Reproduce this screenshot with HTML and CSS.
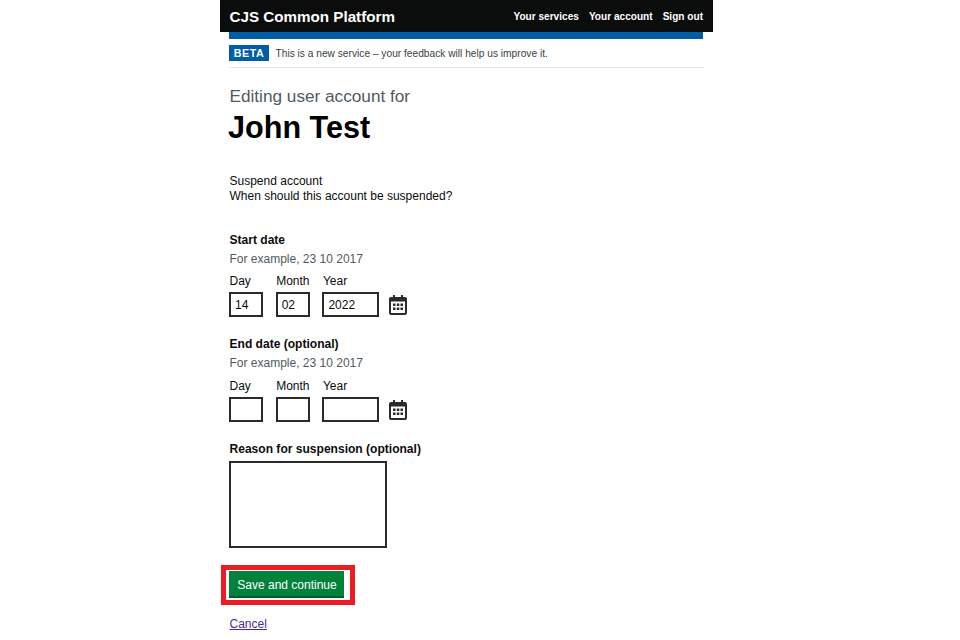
FILE: index.html
```html
<!DOCTYPE html>
<html lang="en">
<head>
<meta charset="utf-8">
<title>Editing user account</title>
<link rel="stylesheet" href="styles.css">
</head>
<body>
<div class="page">
  <header class="topbar">
    <span class="brand">CJS Common Platform</span>
    <nav class="topnav"><a>Your services</a><a>Your account</a><a>Sign out</a></nav>
  </header>
  <main class="content">
    <div class="blue"></div>
    <div class="phase"><strong class="tag">BETA</strong><span class="phase-text">This is a new service – your feedback will help us improve it.</span></div>
    <p class="caption">Editing user account for</p>
    <h1 class="name">John Test</h1>
    <p class="intro">Suspend account<br>When should this account be suspended?</p>

    <section class="date date-start">
      <h2 class="legend">Start date</h2>
      <p class="hint">For example, 23 10 2017</p>
      <div class="fields">
        <label class="field"><span>Day</span><input class="box w2" value="14"></label>
        <label class="field"><span>Month</span><input class="box w2" value="02"></label>
        <label class="field"><span>Year</span><input class="box w4" value="2022"></label>
        <svg class="cal" viewBox="0 0 18 20" width="18" height="20"><path fill="#2b2b2b" d="M4 0h2v3H4zM12 0h2v3h-2z"/><path fill="#2b2b2b" fill-rule="evenodd" d="M2 2h14a2 2 0 0 1 2 2v14a2 2 0 0 1-2 2H2a2 2 0 0 1-2-2V4a2 2 0 0 1 2-2zM2 6.500V18h14V6.500z"/><path fill="#2b2b2b" d="M4 8.500h2.500V11H4zM7.800 8.500h2.500V11H7.800zM11.500 8.500H14V11h-2.500zM4 12.500h2.500V15H4zM7.800 12.500h2.500V15H7.800zM11.500 12.500H14V15h-2.500z"/></svg>
      </div>
    </section>

    <section class="date date-end">
      <h2 class="legend">End date (optional)</h2>
      <p class="hint">For example, 23 10 2017</p>
      <div class="fields">
        <label class="field"><span>Day</span><input class="box w2"></label>
        <label class="field"><span>Month</span><input class="box w2"></label>
        <label class="field"><span>Year</span><input class="box w4"></label>
        <svg class="cal" viewBox="0 0 18 20" width="18" height="20"><path fill="#2b2b2b" d="M4 0h2v3H4zM12 0h2v3h-2z"/><path fill="#2b2b2b" fill-rule="evenodd" d="M2 2h14a2 2 0 0 1 2 2v14a2 2 0 0 1-2 2H2a2 2 0 0 1-2-2V4a2 2 0 0 1 2-2zM2 6.500V18h14V6.500z"/><path fill="#2b2b2b" d="M4 8.500h2.500V11H4zM7.800 8.500h2.500V11H7.800zM11.500 8.500H14V11h-2.500zM4 12.500h2.500V15H4zM7.800 12.500h2.500V15H7.800zM11.500 12.500H14V15h-2.500z"/></svg>
      </div>
    </section>

    <section class="reason">
      <h2 class="legend">Reason for suspension (optional)</h2>
      <textarea class="area"></textarea>
    </section>

    <div class="highlight"><button class="save" type="button">Save and continue</button></div>
    <a class="cancel" href="#">Cancel</a>
  </main>
</div>
</body>
</html>
```
FILE: styles.css
```css
* { box-sizing: border-box; }
html, body { margin: 0; padding: 0; height: 640px; overflow: hidden; background: #fff; }
body { font-family: "Liberation Sans", Arial, sans-serif; color: #0b0c0c; font-size: 12px; }
.page { width: 493px; margin-left: 220px; }
.topbar { height: 32px; background: #0b0c0c; color: #fff; display: flex; align-items: center; justify-content: space-between; padding: 0 10px 0 9.500px; }
.brand { font-weight: 700; font-size: 15.200px; }
.topnav { display: flex; gap: 10px; font-weight: 700; font-size: 10.100px; }
.content { width: 484px; padding-left: 9px; }
.blue { height: 7px; width: 474px; background: #005ea5; }
.phase { width: 475px; height: 29px; border-bottom: 1px solid #e6e7e8; display: flex; align-items: center; gap: 6.500px; font-size: 10.200px; color: #383f43; }
.phase-text { margin-top: 1px; }
.tag { width: 40px; height: 16px; background: #005ea5; color: #fff; font-size: 10.700px; letter-spacing: .6px; display: flex; align-items: center; justify-content: center; }
.caption { margin: 19px 0 0 .5px; font-size: 17.200px; line-height: 19px; color: #505a5f; }
.name { margin: 4px 0 0 -1px; font-size: 30.600px; line-height: 35px; font-weight: 700; color: #000; }
.intro { margin: 29px 0 0 .5px; font-size: 12px; line-height: 15px; }
.date-start { margin-top: 29px; }
.date-end { margin-top: 20px; }
.legend { margin: 0 0 0 .5px; font-size: 12.050px; line-height: 15px; font-weight: 700; }
.hint { margin: 4px 0 0 .5px; font-size: 12px; line-height: 15px; color: #505a5f; }
.fields { display: flex; gap: 12.700px; align-items: flex-end; margin-top: 7px; }
.date-end .fields { margin-top: 8px; }
.field { display: flex; flex-direction: column; gap: 3px; line-height: 15px; }
.field span { margin-left: .5px; }
.box { display: block; height: 25px; border: 2px solid #2b2b2b; border-radius: 0; padding: 0 4px; margin: 0; font: 12px "Liberation Sans", Arial, sans-serif; color: #0b0c0c; background: #fff; outline: none; }
.w2 { width: 34px; }
.w4 { width: 57px; }
.cal { margin-left: -3px; margin-bottom: 2px; display: block; }
.reason { margin-top: 20px; }
.area { display: block; width: 158px; height: 87px; margin-top: 4px; border: 2px solid #2b2b2b; border-radius: 0; padding: 0; resize: none; background: #fff; outline: none; }
.highlight { width: 134px; height: 40px; margin: 17px 0 0 -8px; border: 5px solid #ed1c24; padding: 1px 0 0 3px; }
.save { display: block; width: 115px; height: 27px; padding: 2px 0 0 1px; border: 0; border-bottom: 2px solid #005a30; background: #00823b; color: #fff; font: 12px "Liberation Sans", Arial, sans-serif; }
.cancel { display: inline-block; margin: 12px 0 0 .5px; font-size: 12px; line-height: 15px; color: #4c2c92; }
```
